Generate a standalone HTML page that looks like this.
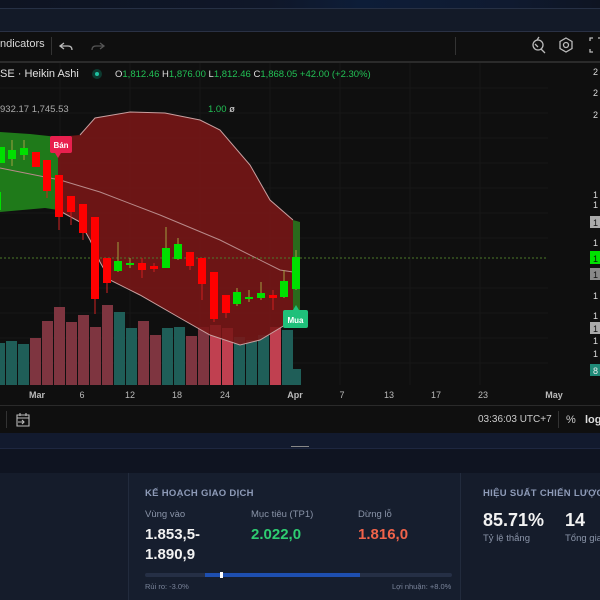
<!DOCTYPE html>
<html><head><meta charset="utf-8"><style>
*{margin:0;padding:0;box-sizing:border-box}
body{width:600px;height:600px;overflow:hidden;background:#0f0f0f;font-family:"Liberation Sans","Noto Sans CJK SC",sans-serif;position:relative}
.a{position:absolute;white-space:nowrap}
</style></head><body>
<div class="a" style="left:0;top:0;width:600px;height:9px;background:linear-gradient(90deg,#0e1422 0%,#0f1729 45%,#0d1d38 60%,#0f1a30 85%,#0e1422 100%)"></div>
<div class="a" style="left:0;top:8px;width:600px;height:1px;background:#263044"></div>
<div class="a" style="left:0;top:9px;width:600px;height:22px;background:#131a28"></div>
<div class="a" style="left:0;top:31px;width:600px;height:1px;background:#2a3144"></div>
<!-- toolbar -->
<div class="a" style="left:0;top:32px;width:600px;height:29px;background:#0f0f0f"></div>
<div class="a" style="left:0;top:38px;font-size:11px;color:#d8d8d8">ndicators</div>
<div class="a" style="left:51px;top:37px;width:1px;height:18px;background:#333"></div>
<div class="a" style="left:455px;top:37px;width:1px;height:18px;background:#333"></div>
<svg class="a" style="left:0;top:32px" width="600" height="30">
<path d="M64 11 L60 14 L64 17 M60 14 H68 Q72 14 72 18" fill="none" stroke="#bbb" stroke-width="1.3"/>
<path d="M100 11 L104 14 L100 17 M104 14 H96 Q92 14 92 18" fill="none" stroke="#555" stroke-width="1.3"/>
<circle cx="538" cy="13" r="5" fill="none" stroke="#bbb" stroke-width="1.3"/><path d="M541 17 L545 21 M537 8 L539 5 M535 12 L538 15" stroke="#bbb" stroke-width="1.3" fill="none"/>
<path d="M566 6 L572 9.5 L572 16.5 L566 20 L560 16.5 L560 9.5 Z" fill="none" stroke="#bbb" stroke-width="1.3"/><circle cx="566" cy="13" r="2.5" fill="none" stroke="#bbb" stroke-width="1.3"/>
<path d="M590 9 V6 H593 M598 6 H600 M590 17 V20 H593" fill="none" stroke="#bbb" stroke-width="1.3"/>
</svg>
<div class="a" style="left:0;top:61px;width:600px;height:2px;background:#2b2b2b"></div>
<!-- chart -->
<svg class="a" style="left:0;top:63px" width="600" height="342" viewBox="0 63 600 342">
<g stroke="#171717" stroke-width="1">
<path d="M0 88H548M0 113H548M0 138H548M0 163H548M0 188H548M0 213H548M0 238H548M0 288H548M0 313H548M0 338H548M0 363H548"/>
<path d="M60 63V385M130 63V385M200 63V385M270 63V385M340 63V385M410 63V385M480 63V385"/>
</g>
<!-- volume -->
<g>
<rect x="-6" y="343" width="11" height="42" fill="#1f5e58"/>
<rect x="6" y="341" width="11" height="44" fill="#1f5e58"/>
<rect x="18" y="344" width="11" height="41" fill="#1f5e58"/>
<rect x="30" y="338" width="11" height="47" fill="#7e3540"/>
<rect x="42" y="321" width="11" height="64" fill="#7e3540"/>
<rect x="54" y="307" width="11" height="78" fill="#7e3540"/>
<rect x="66" y="322" width="11" height="63" fill="#7e3540"/>
<rect x="78" y="315" width="11" height="70" fill="#7e3540"/>
<rect x="90" y="327" width="11" height="58" fill="#7e3540"/>
<rect x="102" y="305" width="11" height="80" fill="#7e3540"/>
<rect x="114" y="312" width="11" height="73" fill="#1f5e58"/>
<rect x="126" y="328" width="11" height="57" fill="#1f5e58"/>
<rect x="138" y="321" width="11" height="64" fill="#7e3540"/>
<rect x="150" y="335" width="11" height="50" fill="#7e3540"/>
<rect x="162" y="328" width="11" height="57" fill="#1f5e58"/>
<rect x="174" y="327" width="11" height="58" fill="#1f5e58"/>
<rect x="186" y="336" width="11" height="49" fill="#7e3540"/>
<rect x="198" y="327" width="11" height="58" fill="#7e3540"/>
<rect x="210" y="325" width="11" height="60" fill="#c04050"/>
<rect x="222" y="328" width="11" height="57" fill="#c04050"/>
<rect x="234" y="337" width="11" height="48" fill="#1f5e58"/>
<rect x="246" y="340" width="11" height="45" fill="#1f5e58"/>
<rect x="258" y="335" width="11" height="50" fill="#1f5e58"/>
<rect x="270" y="327" width="11" height="58" fill="#c04050"/>
<rect x="282" y="330" width="11" height="55" fill="#1f5e58"/>
<rect x="290" y="369" width="11" height="16" fill="#1f5e58"/>
</g>
<path d="M0 132 L30 134 L58 137 L58 210 L45 208 L0 212 Z" fill="#1f7a1a"/>
<path d="M58 137 L80 135 L95 118 L130 112 L165 113 L200 120 L220 130 L250 165 L270 200 L293 220 L293 318 L285 325 L260 340 L240 345 L210 335 L180 318 L140 295 L110 280 L100 262 L90 240 L80 222 L58 210 Z" fill="#7a1717" opacity="0.88"/>
<path d="M293 220 L300 222 L300 310 L293 318 Z" fill="#2a6a1c"/>
<path d="M80 135 L95 118 L130 112 L165 113 L200 120 L220 130 L250 165 L270 200 L293 220" fill="none" stroke="#c9a0a0" stroke-width="1"/>
<path d="M58 210 L80 222 L90 240 L100 262 L110 280 L140 295 L180 318 L210 335 L240 345 L260 340 L285 325 L293 318" fill="none" stroke="#c9a0a0" stroke-width="1"/>
<path d="M0 168 L60 180 L100 192 L160 215 L220 240 L280 270 L293 272" fill="none" stroke="#b88a8a" stroke-width="1"/>
<path d="M0 258 H548" stroke="#4b7a2a" stroke-width="1" stroke-dasharray="2 2"/>
<!-- candles -->
<g fill="#00e000" stroke="#a0a040" stroke-width="1">
<path d="M12 140V166M24 140V160M118 242V272M130 258V268M166 227V268M178 238V260M237 288V306M249 290V302M261 282V300M284 270V298M296 250V290"/>
</g>
<g fill="#00e000">
<rect x="-3" y="147" width="8" height="16"/><rect x="8" y="150" width="8" height="9"/><rect x="20" y="148" width="8" height="7"/>
<rect x="114" y="261" width="8" height="10"/><rect x="126" y="263" width="8" height="2"/><rect x="162" y="248" width="8" height="20"/><rect x="174" y="244" width="8" height="15"/>
<rect x="233" y="292" width="8" height="12"/><rect x="245" y="297" width="8" height="2"/><rect x="257" y="293" width="8" height="5"/><rect x="280" y="281" width="8" height="16"/><rect x="292" y="257" width="8" height="32"/>
<rect x="-3" y="192" width="4" height="18"/>
</g>
<g stroke="#d02020" stroke-width="1">
<path d="M47 160V198M59 175V230M71 196V225M83 204V240M95 217V314M107 258V293M142 258V278M154 263V272M190 252V270M202 258V300M214 272V322M226 295V318M273 290V310"/>
</g>
<g fill="#ff0000">
<rect x="32" y="152" width="8" height="15"/><rect x="43" y="160" width="8" height="31"/><rect x="55" y="175" width="8" height="42"/><rect x="67" y="196" width="8" height="16"/><rect x="79" y="204" width="8" height="29"/><rect x="91" y="217" width="8" height="82"/><rect x="103" y="258" width="8" height="25"/><rect x="138" y="263" width="8" height="7"/><rect x="150" y="266" width="8" height="3"/><rect x="186" y="252" width="8" height="14"/><rect x="198" y="258" width="8" height="26"/><rect x="210" y="272" width="8" height="47"/><rect x="222" y="295" width="8" height="18"/><rect x="269" y="295" width="8" height="3"/>
</g>
<rect x="50" y="136" width="22" height="17" rx="2" fill="#e8204e"/>
<path d="M55 153 L61 153 L58 158Z" fill="#e8204e"/>
<text x="61" y="148" font-size="8" fill="#fff" text-anchor="middle" font-weight="bold" font-family="Liberation Sans">Bán</text>
<rect x="283" y="310" width="25" height="18" rx="2" fill="#1fc07a"/>
<path d="M293 310 L299 310 L296 305Z" fill="#1fc07a"/>
<text x="295.5" y="323" font-size="8" fill="#fff" text-anchor="middle" font-weight="bold" font-family="Liberation Sans">Mua</text>
<!-- right axis -->
<g font-size="9" fill="#ddd" font-family="Liberation Sans">
<text x="593" y="75">2</text><text x="593" y="96">2</text><text x="593" y="118">2</text>
<text x="593" y="198">1</text><text x="593" y="208">1</text>
<rect x="590" y="216" width="10" height="12" fill="#aaa"/><text x="593" y="226" fill="#111">1</text>
<text x="593" y="246">1</text>
<rect x="590" y="251" width="10" height="13" fill="#00e000"/><text x="593" y="262" fill="#111">1</text>
<rect x="590" y="268" width="10" height="12" fill="#888"/><text x="593" y="278" fill="#111">1</text>
<text x="593" y="299">1</text><text x="593" y="319">1</text>
<rect x="590" y="322" width="10" height="12" fill="#aaa"/><text x="593" y="332" fill="#111">1</text>
<text x="593" y="344">1</text><text x="593" y="357">1</text>
<rect x="590" y="364" width="10" height="12" fill="#1f8a78"/><text x="593" y="374" fill="#eee">8</text>
</g>
<g font-size="9" fill="#bbb" font-family="Liberation Sans" text-anchor="middle">
<text x="37" y="398" font-weight="bold">Mar</text><text x="82" y="398">6</text><text x="130" y="398">12</text><text x="177" y="398">18</text><text x="225" y="398">24</text><text x="295" y="398" font-weight="bold">Apr</text><text x="342" y="398">7</text><text x="389" y="398">13</text><text x="436" y="398">17</text><text x="483" y="398">23</text><text x="554" y="398" font-weight="bold">May</text>
</g>
</svg>
<!-- legend -->
<div class="a" style="left:0;top:68px;font-size:11px;color:#e0e0e0">SE · Heikin Ashi</div>
<div class="a" style="left:92px;top:69px;width:10px;height:10px;border-radius:50%;background:#0d3a30"></div>
<div class="a" style="left:95px;top:72px;width:4px;height:4px;border-radius:50%;background:#20c0a0"></div>
<div class="a" style="left:115px;top:69px;font-size:9.5px;color:#22c055"><span style="color:#ddd">O</span>1,812.46 <span style="color:#ddd">H</span>1,876.00 <span style="color:#ddd">L</span>1,812.46 <span style="color:#ddd">C</span>1,868.05 +42.00 (+2.30%)</div>
<div class="a" style="left:0;top:104px;font-size:9.5px;color:#aaa">932.17 1,745.53</div>
<div class="a" style="left:208px;top:104px;font-size:9.5px;color:#22c055">1.00 <span style="color:#ddd">ø</span></div>
<!-- bottom bar -->
<div class="a" style="left:0;top:405px;width:600px;height:1px;background:#2a2a2a"></div>
<div class="a" style="left:0;top:406px;width:600px;height:27px;background:#0f0f0f"></div>
<div class="a" style="left:6px;top:411px;width:1px;height:17px;background:#333"></div>
<svg class="a" style="left:14px;top:411px" width="18" height="18"><path d="M3 4H15V15H3Z M3 7H15 M6 2V5 M12 2V5 M4 11H10 M8 9L10 11L8 13" fill="none" stroke="#bbb" stroke-width="1.1"/></svg>
<div class="a" style="left:478px;top:414px;font-size:10px;color:#ccc">03:36:03 UTC+7</div>
<div class="a" style="left:558px;top:411px;width:1px;height:17px;background:#333"></div>
<div class="a" style="left:566px;top:414px;font-size:11px;color:#ccc">%</div>
<div class="a" style="left:585px;top:414px;font-size:11px;color:#ddd;font-weight:bold">log</div>
<!-- separator -->
<div class="a" style="left:0;top:433px;width:600px;height:15px;background:#121a2e"></div>
<div class="a" style="left:0;top:448px;width:600px;height:1px;background:#1e2740"></div>
<div class="a" style="left:291px;top:446px;width:18px;height:1px;background:#888"></div>
<div class="a" style="left:0;top:449px;width:600px;height:24px;background:#0f1421"></div>
<div class="a" style="left:0;top:473px;width:600px;height:127px;background:#151c2b"></div>
<div class="a" style="left:128px;top:473px;width:1px;height:127px;background:#222b3d"></div>
<div class="a" style="left:129px;top:473px;width:331px;height:127px;background:#161e2e"></div>
<div class="a" style="left:460px;top:473px;width:1px;height:127px;background:#222b3d"></div>
<div class="a" style="left:145px;top:488px;font-size:9.5px;font-weight:bold;color:#8e9bb8;letter-spacing:0.3px">KẾ HOẠCH GIAO DỊCH</div>
<div class="a" style="left:145px;top:509px;font-size:9.5px;color:#8a94a8">Vùng vào</div>
<div class="a" style="left:251px;top:509px;font-size:9.5px;color:#8a94a8">Mục tiêu (TP1)</div>
<div class="a" style="left:358px;top:509px;font-size:9.5px;color:#8a94a8">Dừng lỗ</div>
<div class="a" style="left:145px;top:525px;font-size:15px;font-weight:bold;color:#f2f2f2;line-height:20px">1.853,5-<br>1.890,9</div>
<div class="a" style="left:251px;top:525px;font-size:15px;font-weight:bold;color:#2ecc71;line-height:20px">2.022,0</div>
<div class="a" style="left:358px;top:525px;font-size:15px;font-weight:bold;color:#f0634a;line-height:20px">1.816,0</div>
<div class="a" style="left:145px;top:573px;width:307px;height:4px;border-radius:2px;background:#252f45"></div>
<div class="a" style="left:205px;top:573px;width:155px;height:4px;background:#1e4fb0"></div>
<div class="a" style="left:220px;top:572px;width:3px;height:6px;background:#fff"></div>
<div class="a" style="left:145px;top:582px;font-size:7.5px;color:#7a849a">Rủi ro: -3.0%</div>
<div class="a" style="left:392px;top:582px;font-size:7.5px;color:#7a849a">Lợi nhuận: +8.0%</div>
<div class="a" style="left:483px;top:488px;font-size:9.5px;font-weight:bold;color:#8e9bb8;letter-spacing:0.3px">HIỆU SUẤT CHIẾN LƯỢC</div>
<div class="a" style="left:483px;top:510px;font-size:18px;font-weight:bold;color:#f2f2f2">85.71%</div>
<div class="a" style="left:565px;top:510px;font-size:18px;font-weight:bold;color:#f2f2f2">14</div>
<div class="a" style="left:483px;top:533px;font-size:9.5px;color:#8a94a8">Tỷ lệ thắng</div>
<div class="a" style="left:565px;top:533px;font-size:9.5px;color:#8a94a8">Tổng giao</div>
</body></html>
